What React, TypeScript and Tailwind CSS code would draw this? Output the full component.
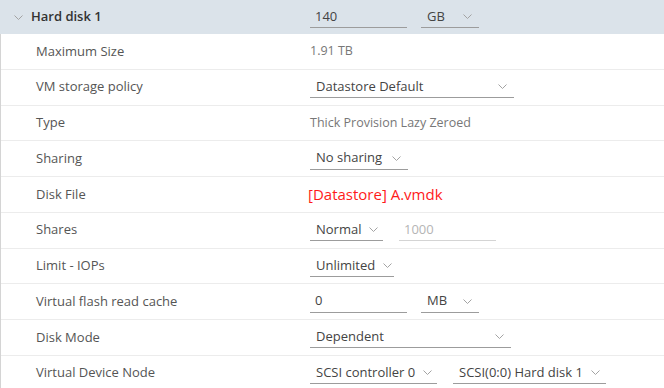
import React from 'react';

const font = { fontFamily: '"Open Sans", "Liberation Sans", sans-serif' };

function Chevron({ className = '' }: { className?: string }) {
  return (
    <svg width="9" height="5" viewBox="0 0 9 5" className={className}>
      <polyline points="0.5,0.5 4.5,4.5 8.5,0.5" fill="none" stroke="#a3a3a3" strokeWidth="1" />
    </svg>
  );
}

function Select({ text, w }: { text: string; w: string }) {
  return (
    <div className={`${w} h-[22px] flex items-center justify-between pl-[6px] pr-[7px] border-b border-[#9c9c9c] text-[13px] text-[#444]`}>
      <span className="whitespace-nowrap">{text}</span>
      <Chevron className="ml-2 shrink-0" />
    </div>
  );
}

function Input({ text, w, disabled }: { text: string; w: string; disabled?: boolean }) {
  return (
    <div
      className={`${w} h-[22px] flex items-center pl-[5px] border-b text-[13px] ${
        disabled ? 'border-[#d4d4d4] text-[#b5b5b5]' : 'border-[#9c9c9c] text-[#444]'
      }`}
    >
      {text}
    </div>
  );
}

function Row({ label, children }: { label: string; children: React.ReactNode }) {
  return (
    <div className="h-[35.75px] flex items-center border-b border-[#ececec]">
      <div className="w-[309px] shrink-0 pl-[35px] text-[13px] text-[#555]">{label}</div>
      <div className="flex items-center gap-4">{children}</div>
    </div>
  );
}

export default function App() {
  return (
    <div className="w-[664px] h-[388px] bg-white overflow-hidden" style={font}>
      <div className="h-[34px] flex items-center bg-[#dbe3ea]">
        <div className="w-[310px] shrink-0 flex items-center pl-[14px]">
          <Chevron />
          <span className="ml-[8px] text-[13px] font-semibold text-[#333]">Hard disk 1</span>
        </div>
        <div className="flex items-center gap-[14px]">
          <Input text="140" w="w-[97px]" />
          <Select text="GB" w="w-[58px]" />
        </div>
      </div>
      <div className="border-l border-[#d4d4d4]">
        <Row label="Maximum Size">
          <span className="text-[12.5px] text-[#777]">1.91 TB</span>
        </Row>
        <Row label="VM storage policy">
          <Select text="Datastore Default" w="w-[204px]" />
        </Row>
        <Row label="Type">
          <span className="text-[12.5px] text-[#777]">Thick Provision Lazy Zeroed</span>
        </Row>
        <Row label="Sharing">
          <Select text="No sharing" w="w-[98px]" />
        </Row>
        <Row label="Disk File">
          <span className="text-[15px] text-[#ff1a1a] -ml-[2px]">[Datastore] A.vmdk</span>
        </Row>
        <Row label="Shares">
          <Select text="Normal" w="w-[73px]" />
          <Input text="1000" w="w-[97px]" disabled />
        </Row>
        <Row label="Limit - IOPs">
          <Select text="Unlimited" w="w-[84px]" />
        </Row>
        <Row label="Virtual flash read cache">
          <div className="flex items-center gap-[14px]">
            <Input text="0" w="w-[97px]" />
            <Select text="MB" w="w-[58px]" />
          </div>
        </Row>
        <Row label="Disk Mode">
          <Select text="Dependent" w="w-[201px]" />
        </Row>
        <Row label="Virtual Device Node">
          <Select text="SCSI controller 0" w="w-[127px]" />
          <Select text="SCSI(0:0) Hard disk 1" w="w-[153px]" />
        </Row>
      </div>
    </div>
  );
}
